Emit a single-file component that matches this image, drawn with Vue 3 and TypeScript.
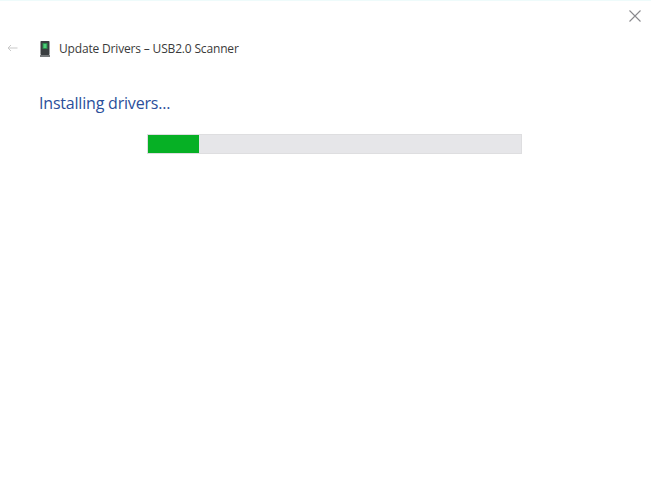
<script setup lang="ts">
const progress: number = 13.7;
</script>

<template>
  <div class="window">
    <div class="topline"></div>
    <div class="closebar">
      <svg class="close" width="12" height="12" viewBox="0 0 12 12" aria-label="Close">
        <path d="M0.5 0.5 L11.5 11.5 M11.5 0.5 L0.5 11.5" stroke="#8a8a8e" stroke-width="1.1" fill="none" />
      </svg>
    </div>
    <div class="header">
      <svg class="back" width="11" height="8" viewBox="0 0 11 8" aria-label="Back">
        <path d="M10.5 4 H1 M4 1 L1 4 L4 7" stroke="#c9c9c9" stroke-width="1" fill="none" />
      </svg>
      <svg class="device" width="12" height="16" viewBox="0 0 12 16" aria-hidden="true">
        <rect x="1.5" y="0" width="9" height="14" rx="0.8" fill="#3a3e40" />
        <rect x="3.5" y="2" width="5" height="6" fill="#2a8a4a" />
        <rect x="4.5" y="3" width="3" height="4" fill="#4ccf78" />
        <rect x="1" y="14" width="10" height="2" fill="#75787a" />
      </svg>
      <span class="title">Update Drivers – USB2.0 Scanner</span>
    </div>
    <h1 class="heading">Installing drivers...</h1>
    <div class="track">
      <div class="fill" :style="{ width: progress + '%' }"></div>
    </div>
  </div>
</template>

<style scoped>
.window {
  width: 651px;
  height: 504px;
  background: #ffffff;
  font-family: "Open Sans", "Noto Sans", "Liberation Sans", sans-serif;
  overflow: hidden;
}
.topline {
  height: 1px;
  background: #eefbfb;
}
.closebar {
  display: flex;
  justify-content: flex-end;
  padding: 9px 10px 0 0;
  height: 12px;
}
.header {
  display: flex;
  align-items: center;
  height: 18px;
  margin-top: 18px;
  padding-left: 7px;
}
.back {
  margin: -3px 21px 0 0;
}
.device {
  margin-right: 8px;
}
.title {
  font-size: 12px;
  line-height: 18px;
  color: #3a3a3a;
  letter-spacing: -0.17px;
}
.heading {
  margin: 33px 0 0 39px;
  font-size: 16px;
  line-height: 24px;
  font-weight: 400;
  color: #2b4f9b;
  letter-spacing: -0.2px;
}
.track {
  box-sizing: border-box;
  width: 375px;
  height: 20px;
  margin: 19px 0 0 147px;
  background: #e6e6e9;
  border: 1px solid #dedee0;
}
.fill {
  height: 100%;
  background: #06b025;
}
</style>
